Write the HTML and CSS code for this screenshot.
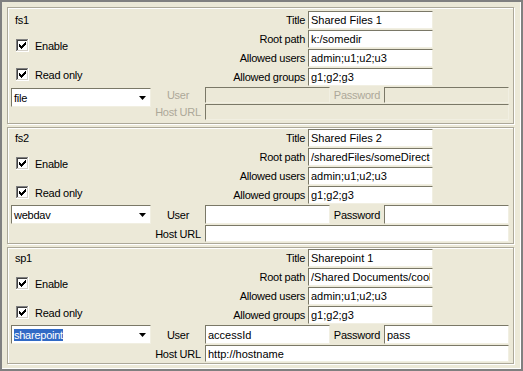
FILE: index.html
```html
<!DOCTYPE html>
<html lang="en">
<head>
  <meta charset="UTF-8">
  <title>Shares</title>
  <link rel="stylesheet" href="styles.css">
</head>
<body>

  <svg class="defs" width="0" height="0">
    <symbol id="chk" viewBox="0 0 13 13">
      <path fill="#808080" d="M0 0h12v1H1v11H0z"/>
      <path fill="#404040" d="M1 1h10v1H2v9H1z"/>
      <path fill="#fff" d="M12 0h1v13H0v-1h12z"/>
      <path fill="#d4d0c8" d="M11 1h1v11H1v-1h10z"/>
      <rect x="2" y="2" width="9" height="9" fill="#fff"/>
      <path fill="#000" d="M3 5h1v3H3zM4 6h1v3H4zM5 7h1v3H5zM6 6h1v3H6zM7 5h1v3H7zM8 4h1v3H8zM9 3h1v3H9z"/>
    </symbol>
    <symbol id="down" viewBox="0 0 7 4">
      <path fill="#000" d="M0 0h7L3.5 4z"/>
    </symbol>
  </svg>

  <div class="frame">

    <section class="share idle">
      <div class="top">
        <div class="side">
          <div class="name">fs1</div>
          <div class="check first"><svg class="box"><use href="#chk"/></svg>Enable</div>
          <div class="check second"><svg class="box"><use href="#chk"/></svg>Read only</div>
        </div>
        <div class="fields">
          <label>Title</label><input class="field" value="Shared Files 1">
          <label>Root path</label><input class="field" value="k:/somedir">
          <label>Allowed users</label><input class="field" value="admin;u1;u2;u3">
          <label>Allowed groups</label><input class="field" value="g1;g2;g3">
        </div>
      </div>
      <div class="bottom">
        <div class="combo"><span class="text">file</span><span class="arrow"><svg><use href="#down"/></svg></span></div>
        <label class="off">User</label><input class="field off" disabled>
        <label class="off">Password</label><input class="field off" disabled>
        <label class="off host-label">Host URL</label><input class="field off host" disabled>
      </div>
    </section>

    <section class="share">
      <div class="top">
        <div class="side">
          <div class="name">fs2</div>
          <div class="check first"><svg class="box"><use href="#chk"/></svg>Enable</div>
          <div class="check second"><svg class="box"><use href="#chk"/></svg>Read only</div>
        </div>
        <div class="fields">
          <label>Title</label><input class="field" value="Shared Files 2">
          <label>Root path</label><input class="field" value="/sharedFiles/someDirectory">
          <label>Allowed users</label><input class="field" value="admin;u1;u2;u3">
          <label>Allowed groups</label><input class="field" value="g1;g2;g3">
        </div>
      </div>
      <div class="bottom">
        <div class="combo"><span class="text">webdav</span><span class="arrow"><svg><use href="#down"/></svg></span></div>
        <label>User</label><input class="field">
        <label>Password</label><input class="field">
        <label class="host-label">Host URL</label><input class="field host">
      </div>
    </section>

    <section class="share">
      <div class="top">
        <div class="side">
          <div class="name">sp1</div>
          <div class="check first"><svg class="box"><use href="#chk"/></svg>Enable</div>
          <div class="check second"><svg class="box"><use href="#chk"/></svg>Read only</div>
        </div>
        <div class="fields">
          <label>Title</label><input class="field" value="Sharepoint 1">
          <label>Root path</label><input class="field" value="/Shared Documents/coolStuff">
          <label>Allowed users</label><input class="field" value="admin;u1;u2;u3">
          <label>Allowed groups</label><input class="field" value="g1;g2;g3">
        </div>
      </div>
      <div class="bottom">
        <div class="combo"><span class="text"><span class="sel">sharepoint</span></span><span class="arrow"><svg><use href="#down"/></svg></span></div>
        <label>User</label><input class="field" value="accessId">
        <label>Password</label><input class="field" value="pass">
        <label class="host-label">Host URL</label><input class="field host" value="http://hostname">
      </div>
    </section>

  </div>

</body>
</html>
```

FILE: styles.css
```css
body {
  margin: 0;
  background-color: #ece9d8;
  font-family: "Liberation Sans", Arial, sans-serif;
  font-size: 11px;
  letter-spacing: -0.25px;
  color: #000;
}

.defs {
  position: absolute;
}

.frame {
  box-sizing: border-box;
  width: 523px;
  height: 371px;
  border: 2px solid #808080;
  box-shadow: inset -1px -1px 0 #fff;
  padding: 5px 7px 5px 5px;
  display: flex;
  flex-direction: column;
  gap: 3px;
}

.share {
  box-sizing: border-box;
  height: 117px;
  border: 1px solid #aca899;
  box-shadow: inset 1px 1px 0 #fff, 1px 1px 0 #fff;
  padding: 0 4px 0 3px;
  display: flex;
  flex-direction: column;
  justify-content: center;
  gap: 1px;
}

.top {
  display: flex;
}

.side {
  flex: 1;
  padding-left: 4px;
}

.name {
  height: 18px;
  line-height: 18px;
}

.check {
  display: flex;
  align-items: center;
  height: 13px;
  padding-left: 1px;
}

.check.first {
  margin-top: 10px;
}

.check.second {
  margin-top: 16px;
}

.box {
  width: 13px;
  height: 13px;
  margin-right: 6px;
}

.fields {
  display: grid;
  grid-template-columns: auto 125px;
  grid-auto-rows: 18px;
  row-gap: 1px;
  column-gap: 3px;
  align-items: center;
  margin-right: 76px;
}

.fields label {
  text-align: right;
}

.field {
  box-sizing: border-box;
  width: 100%;
  height: 100%;
  margin: 0;
  padding: 0 2px;
  border: 1px solid;
  border-color: #7a7867 #f1efe2 #f1efe2 #7a7867;
  background: #fff;
  font: inherit;
  color: #000;
  outline: none;
}

.field.off {
  background: #ece9d8;
}

.bottom {
  display: grid;
  grid-template-columns: 140px 54px 125px 54px 125px;
  grid-template-rows: 19px 17px;
  row-gap: 1px;
  align-items: center;
}

.idle .bottom {
  grid-template-rows: 16px 16px;
}

.idle .combo {
  align-self: start;
  margin-top: 1px;
}

.bottom label {
  text-align: center;
}

.bottom label.off {
  color: #aca899;
}

.host-label {
  grid-column: 2;
}

.field.host {
  grid-column: 3 / 6;
}

.combo {
  box-sizing: border-box;
  height: 19px;
  display: flex;
  align-items: center;
  border: 1px solid;
  border-color: #7a7867 #f1efe2 #f1efe2 #7a7867;
  background: #fff;
  padding: 1px;
}

.combo .text {
  flex: 1;
  padding-left: 1px;
}

.sel {
  background: #316ac5;
  color: #fff;
}

.arrow {
  width: 13px;
  height: 100%;
  display: flex;
  align-items: center;
  justify-content: center;
}

.arrow svg {
  width: 7px;
  height: 4px;
}
```
